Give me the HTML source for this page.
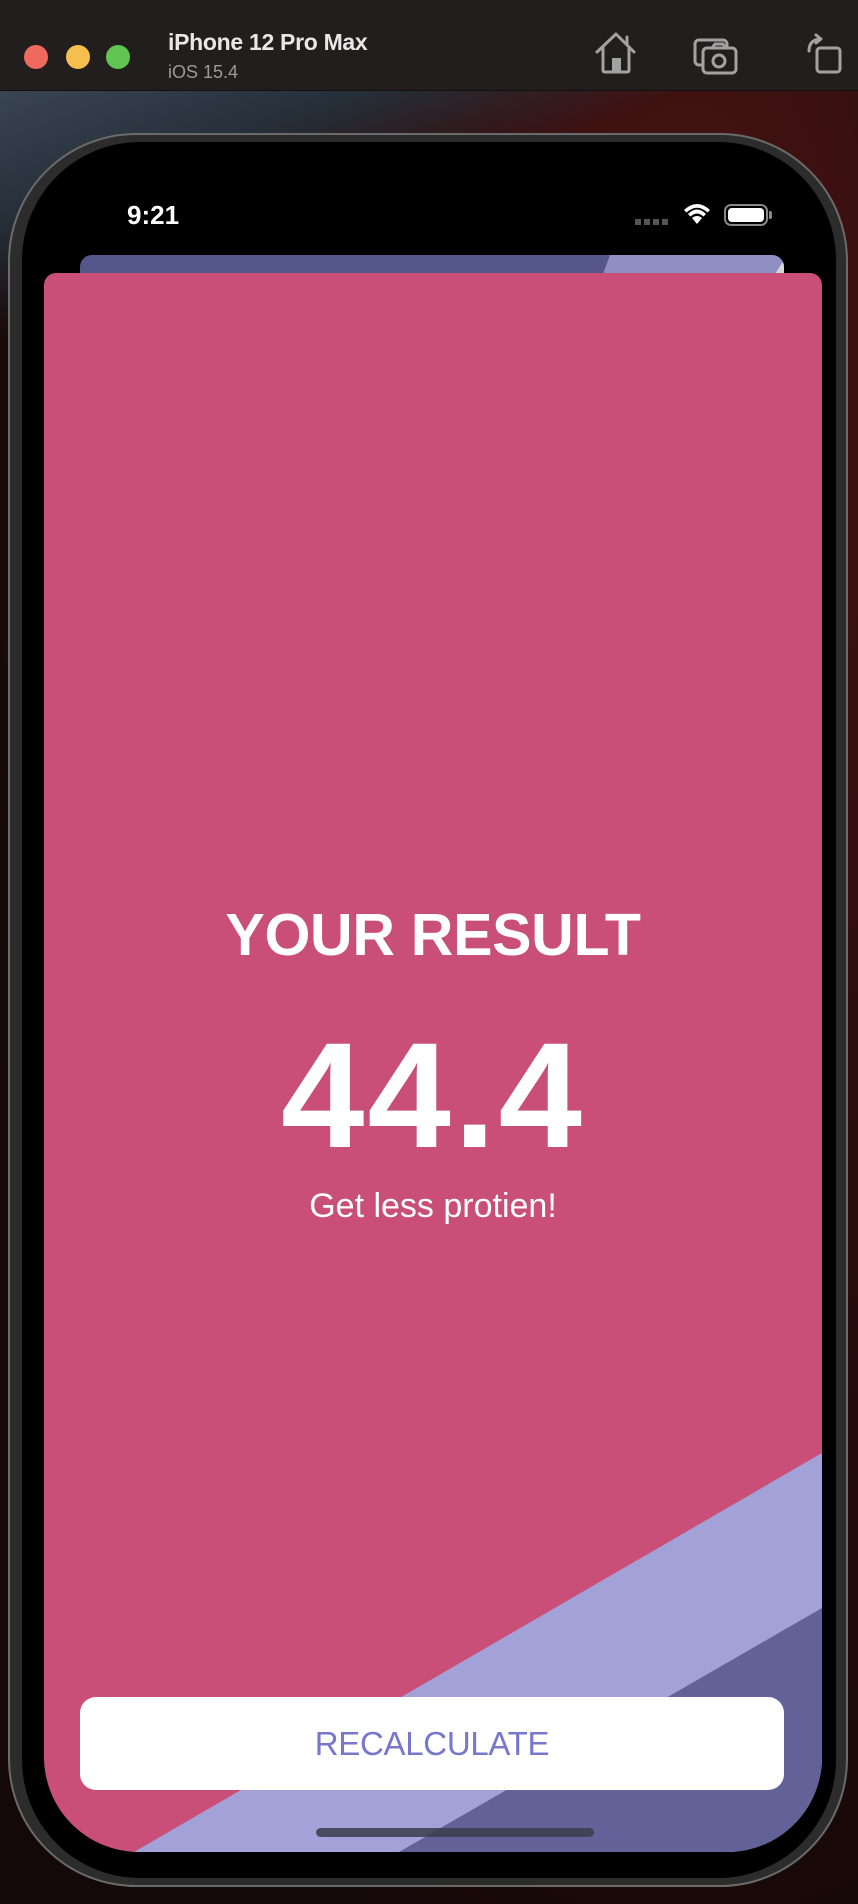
<!DOCTYPE html>
<html><head><meta charset="utf-8"><style>
*{margin:0;padding:0;box-sizing:border-box}
html,body{width:858px;height:1904px;overflow:hidden}
body{position:relative;background:radial-gradient(ellipse at 80% 20%,#4a1414 0%,#2a0c0c 40%,#140808 80%);font-family:"Liberation Sans",sans-serif}
.lb{position:absolute;left:0;top:91px;width:858px;height:400px;background:linear-gradient(160deg,#3a4552 0%,#26303a 18%,rgba(30,20,20,0) 35%)}
.title{position:absolute;left:0;top:0;width:858px;height:91px;background:#221e1e;border-bottom:1px solid #111}
.dot{position:absolute;top:45px;width:24px;height:24px;border-radius:50%}
.t1{position:absolute;left:168px;top:29px;color:#e8e8e8;font-weight:bold;font-size:23px;letter-spacing:-0.3px}
.t2{position:absolute;left:168px;top:62px;color:#9a9a9a;font-size:18px}
.phone{position:absolute;left:8px;top:133px;width:840px;height:1754px;border-radius:128px;background:#2c2c2c;border:2px solid #6a6a6a}
.screen{position:absolute;left:22px;top:142px;width:814px;height:1736px;border-radius:118px;background:#000;overflow:hidden}
.back{position:absolute;left:58px;top:113px;width:704px;height:60px;border-radius:12px;background:#55568a;overflow:hidden}
.card{position:absolute;left:22px;top:131px;width:778px;height:1579px;background:#c94f78;border-radius:12px 12px 95px 95px;overflow:hidden}
.txt{position:absolute;left:0;width:778px;text-align:center;color:#fff}
.btn{position:absolute;left:36px;top:1424px;width:704px;height:93px;background:#fff;border-radius:16px;text-align:center;line-height:93px;color:#7777cc;font-size:33px;letter-spacing:-0.3px}
.home{position:absolute;left:272px;top:1555px;width:278px;height:9px;border-radius:5px;background:rgba(60,60,75,0.85)}
</style></head><body>
<div class="lb"></div>
<div class="title">
<div class="dot" style="left:24px;background:#ee6a5f"></div>
<div class="dot" style="left:66px;background:#f5bf4f"></div>
<div class="dot" style="left:106px;background:#61c554"></div>
<div class="t1">iPhone 12 Pro Max</div>
<div class="t2">iOS 15.4</div>
<svg style="position:absolute;left:580px;top:20px" width="270" height="70" viewBox="0 0 270 70" fill="none" stroke="#a2a2a2" stroke-width="3" stroke-linejoin="round" stroke-linecap="round">
<path d="M17 32 L36 14 L54 32 M23 28 V50 Q23 52 25 52 H47 Q49 52 49 50 V28 M47 17 V25"/>
<rect x="32" y="38" width="9" height="14" fill="#a2a2a2" stroke="none"/>
<rect x="115" y="20" width="32" height="25" rx="4"/>
<rect x="123" y="28" width="33" height="25" rx="4" fill="#221e1e"/>
<path d="M132 28 L135 24 H143 L146 28"/>
<circle cx="139" cy="41" r="6"/>
<path d="M229 31 Q229 20 240 19 M236 15 L241 19 L236 23"/>
<rect x="237" y="28" width="23" height="24" rx="3"/>
</svg>
</div>
<div class="phone"></div>
<div class="screen">
<div style="position:absolute;left:105px;top:58px;color:#fff;font-size:26px;font-weight:bold">9:21</div>
<div style="position:absolute;left:613px;top:77px;width:34px;height:6px;background:repeating-linear-gradient(90deg,#555 0 6px,transparent 6px 9px)"></div>
<svg style="position:absolute;left:660px;top:60px" width="30" height="24" viewBox="0 0 30 24"><path d="M15 22 L10 16 Q15 12 20 16 Z M6 12 Q15 3 24 12 L21.5 14.5 Q15 8.5 8.5 14.5 Z M2 8 Q15 -4 28 8 L25.5 10.5 Q15 1 4.5 10.5 Z" fill="#fff"/></svg>
<div style="position:absolute;left:702px;top:62px;width:44px;height:22px;border:2px solid #888;border-radius:7px;padding:2px"><div style="width:100%;height:100%;background:#fff;border-radius:4px"></div></div>
<div style="position:absolute;left:747px;top:69px;width:3px;height:8px;background:#888;border-radius:0 2px 2px 0"></div>
<div class="back"><svg width="704" height="60" style="position:absolute;left:0;top:0"><polygon points="530,0 704,0 704,60 508,60" fill="#8f8fc3"/><polygon points="704,5 704,30 688,30" fill="#d6d6d6"/></svg></div>
<div class="card">
<svg width="778" height="1579" style="position:absolute;left:0;top:0"><polygon points="778,1180 778,1579 90,1579" fill="#a2a2d8"/><polygon points="778,1335 778,1579 355,1579" fill="#626299"/></svg>
<div class="txt" style="top:628px;font-size:59px;font-weight:bold;letter-spacing:-0.3px">YOUR RESULT</div>
<div class="txt" style="top:732px;font-size:150px;font-weight:bold;line-height:1.2;letter-spacing:3px">44.4</div>
<div class="txt" style="top:914px;font-size:34px">Get less protien!</div>
<div class="btn">RECALCULATE</div>
<div class="home"></div>
</div>
</div>
</body></html>
